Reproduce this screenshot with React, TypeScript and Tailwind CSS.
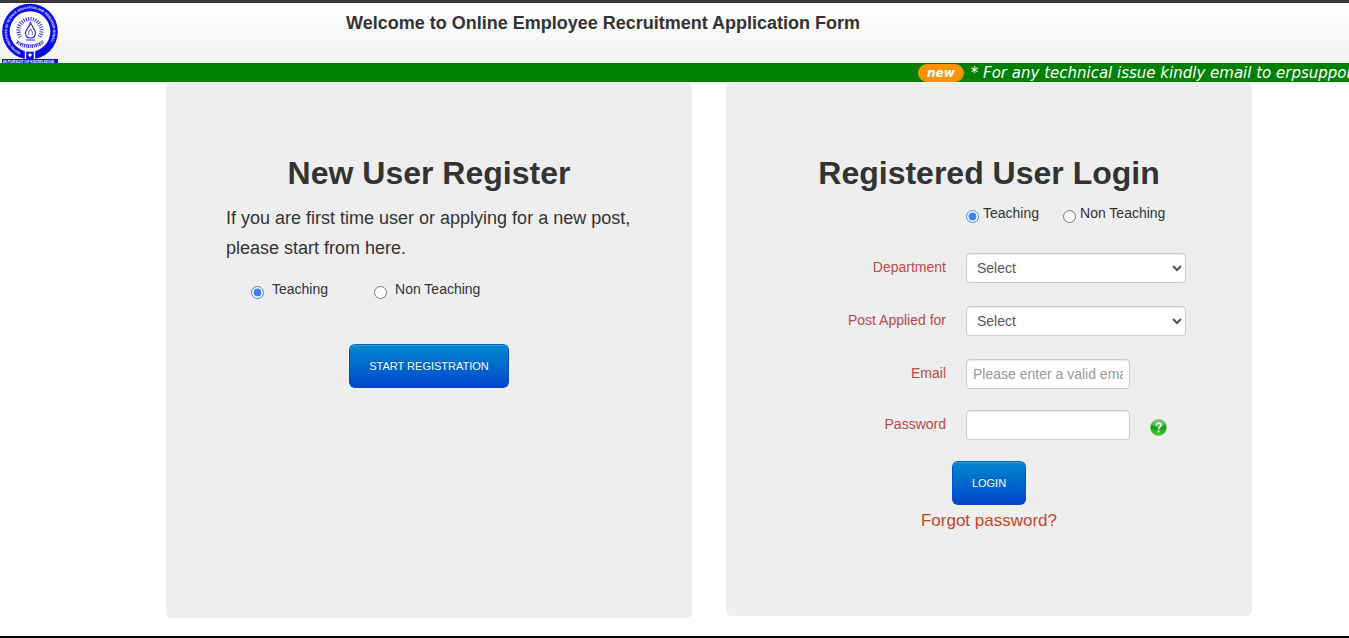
import React from 'react';

const postTypes = ['Teaching', 'Non Teaching'];

const selects = [
  { id: 'department', label: 'Department' },
  { id: 'post', label: 'Post Applied for' },
];

const buttonClass =
  'h-11 px-[19px] rounded-md border border-[#0050c8] border-t-[#0066b4] bg-linear-to-b from-[#0088cc] to-[#0044cc] text-[11px] leading-5 text-white shadow-[inset_0_1px_0_rgba(255,255,255,0.2)] [text-shadow:0_-1px_0_rgba(0,0,0,0.25)] cursor-pointer';

const fieldClass =
  'h-[30px] rounded-sm border border-[#cccccc] bg-white px-1.5 text-sm text-[#555555] shadow-[inset_0_1px_1px_rgba(0,0,0,0.075)]';

const labelClass = 'w-40 shrink-0 text-right text-sm leading-5 pt-1 text-[#b94a48]';

const radioClass = 'mt-[7px] size-[13px] accent-[#3b82f6]';

const Crest: React.FC = () => (
  <svg width="60" height="60" viewBox="0 3 60 60" role="img" aria-label="Institute crest" className="shrink-0">
    <defs>
      <path id="ring" d="M 20.5 52.5 A 23 23 0 1 1 39.5 52.5" fill="none" />
    </defs>
    <circle cx="30" cy="31.5" r="27.8" fill="#0c0ce8" />
    <circle cx="30" cy="31.5" r="20.3" fill="#fff" />
    <text fontSize="3.2" fontWeight="bold" fill="#fff" fontFamily="Liberation Sans, sans-serif">
      <textPath href="#ring">INDIAN INSTITUTE OF SCIENCE EDUCATION AND RESEARCH MOHALI</textPath>
    </text>
    {/* rays around the flame */}
    <path d="M20.500 37a11.500 11.500 0 1 1 19 0" fill="none" stroke="#3030e4" strokeWidth="4" strokeDasharray="1 1.300" />
    <circle cx="30" cy="31" r="8.500" fill="#fff" />
    <path d="M30.500 22c.3 4-5 6.500-5 11 0 3 2 5 5 5s5-2 5-5c0-4.500-4.700-7-5-11z" fill="none" stroke="#2a2ae0" strokeWidth="1.200" />
    <path d="M30.500 29c-2 3-2.500 4-1.500 6M30.500 29c2 3 2.500 4 1.500 6" fill="none" stroke="#2a2ae0" strokeWidth="0.800" />
    <path d="M26 40h9" stroke="#2a2ae0" strokeWidth="1" />
    <path d="M17 42c6 6 20 6 26 0" fill="none" stroke="#2a2ae0" strokeWidth="3" strokeDasharray="1.300 0.900 0.800 0.900" />
    <path d="M17 40.500c6 6 20 6 26 0" fill="none" stroke="#2a2ae0" strokeWidth="0.700" />
    <path d="M25.500 50.500v8.500M34.500 50.500v8.500" stroke="#fff" strokeWidth="1.400" />
    <circle cx="30" cy="55" r="1.700" fill="#fff" />
    <path d="M2 59h56v6H2z" fill="#0c0ce8" />
    <text x="3" y="62.800" fontSize="3.600" fontWeight="bold" fill="#fff" fontFamily="Liberation Sans, sans-serif">
      IN PURSUIT OF KNOWLEDGE
    </text>
  </svg>
);

const HelpIcon: React.FC = () => (
  <svg width="17" height="17" viewBox="0 0 17 17" aria-hidden="true">
    <defs>
      <linearGradient id="help" x1="0" y1="0" x2="0" y2="1">
        <stop offset="0" stopColor="#55b455" />
        <stop offset="0.5" stopColor="#169b16" />
        <stop offset="1" stopColor="#3ed63e" />
      </linearGradient>
    </defs>
    <circle cx="8.5" cy="8.500" r="8" fill="url(#help)" stroke="#5cb85c" strokeWidth="0.600" />
    <ellipse cx="8.500" cy="4.500" rx="6" ry="3.500" fill="#fff" opacity="0.250" />
    <path d="M6.300 6.500c.1-3 4.800-3 4.600-.2-.1 1.700-2.200 1.700-2.200 3.700" fill="none" stroke="#fff" strokeWidth="1.700" />
    <circle cx="8.600" cy="12.300" r="1.100" fill="#fff" />
  </svg>
);

const App: React.FC = () => {
  return (
    <div className="bg-white text-[#333333] font-['Liberation_Sans',Arial,sans-serif] text-sm">
      <header className="flex border-t-3 border-[#3a3a3a] bg-linear-to-b from-white to-[#f2f2f2]">
        <Crest />
        <h1 className="ml-[286px] pt-2.5 text-lg leading-5 font-bold">
          Welcome to Online Employee Recruitment Application Form
        </h1>
      </header>

      <div className="flex h-[19px] items-center overflow-hidden whitespace-nowrap bg-[#008000] pl-[918px] font-['DejaVu_Sans',sans-serif] italic text-white">
        <span className="h-[18px] shrink-0 rounded-full bg-[#f89406] px-[9px] text-xs leading-[18px] font-bold">new</span>
        <span className="pl-[7px] pt-0.5 text-[15px] leading-[19px]">* For any technical issue kindly email to erpsupport</span>
      </div>

      <main className="grid grid-cols-2 items-start gap-[34px] pt-px pb-[18px] pl-[166px] pr-[97px]">
        <section className="min-h-[535px] rounded-md bg-[#eeeeee] p-[60px]">
          <h2 className="text-center text-[32px] leading-[60px] font-bold">New User Register</h2>
          <p className="text-lg leading-[30px]">
            If you are first time user or applying for a new post, please start from here.
          </p>
          <div className="mt-4 flex gap-[46px] pl-[25px]">
            {postTypes.map((type, i) => (
              <label key={type} className="flex gap-2 leading-5">
                <input type="radio" name="register-type" defaultChecked={i === 0} className={radioClass} />
                {type}
              </label>
            ))}
          </div>
          <div className="mt-[45px] text-center">
            <button type="button" className={buttonClass}>START REGISTRATION</button>
          </div>
        </section>

        <section className="min-h-[533px] rounded-md bg-[#eeeeee] p-[60px]">
          <h2 className="text-center text-[32px] leading-[60px] font-bold">Registered User Login</h2>
          <form>
            <div className="mb-[30px] flex gap-6 pl-[180px]">
              {postTypes.map((type, i) => (
                <label key={type} className="flex gap-1 leading-5 whitespace-nowrap">
                  <input type="radio" name="login-type" defaultChecked={i === 0} className={radioClass} />
                  {type}
                </label>
              ))}
            </div>
            {selects.map((field) => (
              <div key={field.id} className="mb-[23px] flex gap-5">
                <label htmlFor={field.id} className={labelClass}>{field.label}</label>
                <select id={field.id} className={`${fieldClass} w-[220px]`}>
                  <option>Select</option>
                </select>
              </div>
            ))}
            <div className="mb-[21px] flex gap-5">
              <label htmlFor="email" className={labelClass}>Email</label>
              <input
                id="email"
                type="email"
                placeholder="Please enter a valid email"
                className={`${fieldClass} w-[164px] placeholder:text-[#999999]`}
              />
            </div>
            <div className="mb-[21px] flex gap-5">
              <label htmlFor="password" className={labelClass}>Password</label>
              <input id="password" type="password" className={`${fieldClass} w-[164px]`} />
              <button type="button" aria-label="Password help" className="mt-1 cursor-pointer">
                <HelpIcon />
              </button>
            </div>
            <div className="text-center">
              <button type="button" className={buttonClass}>LOGIN</button>
            </div>
            <p className="text-center text-[17px] leading-8">
              <a href="#forgot" className="text-[#c8452b]">Forgot password?</a>
            </p>
          </form>
        </section>
      </main>

      <footer className="border-t-2 border-black" />
    </div>
  );
};

export default App;
